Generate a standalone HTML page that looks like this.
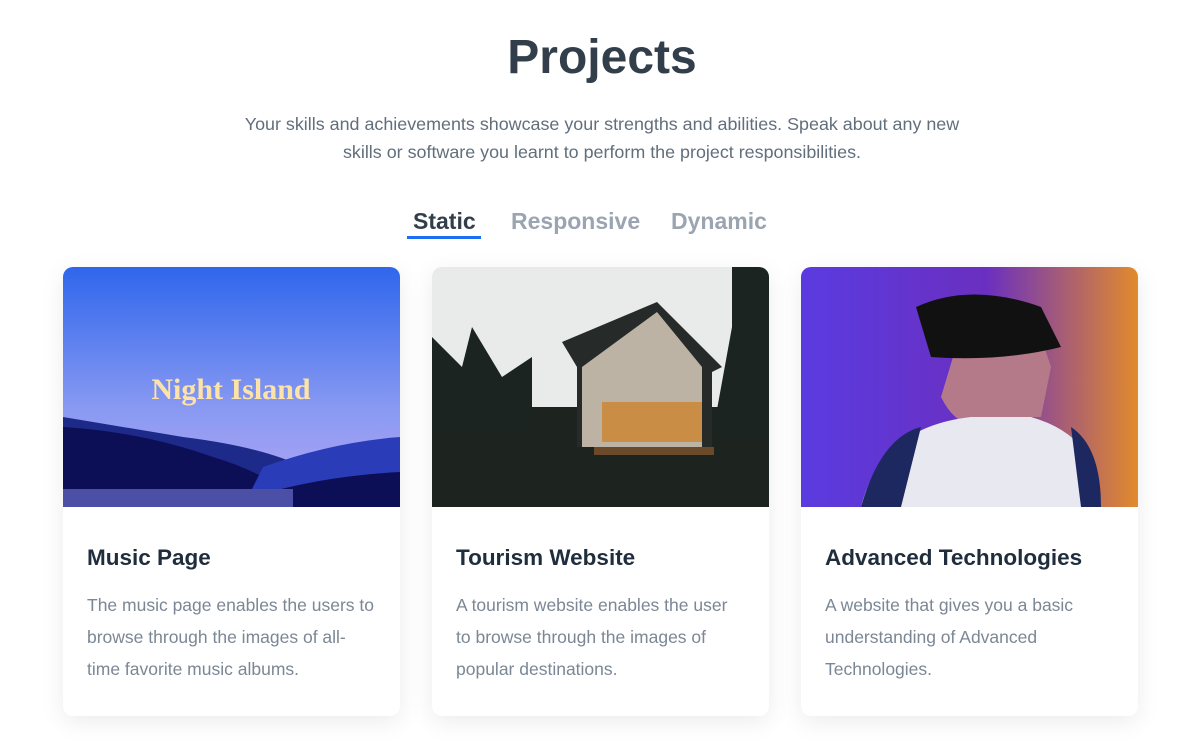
<!DOCTYPE html>
<html><head><meta charset="utf-8"><style>
body{margin:0;background:#fff;font-family:"Liberation Sans",sans-serif;width:1204px;height:742px;overflow:hidden;position:relative}
h1{position:absolute;top:30px;left:0;width:1204px;text-align:center;margin:0;font-size:48px;font-weight:bold;color:#323f4b}
.sub{position:absolute;top:110px;left:0;width:1204px;text-align:center;font-size:17.9px;line-height:28px;color:#616e7c;margin:0}
.tab{position:absolute;top:208px;font-size:23px;font-weight:bold;color:#9aa5b1}
.card{position:absolute;top:267px;width:337px;height:449px;border-radius:10px;background:#fff;box-shadow:0 6px 24px rgba(0,0,0,0.08);overflow:hidden}
.img{height:240px;position:relative;overflow:hidden}
.card h3{margin:0;position:absolute;top:278px;left:24px;font-size:22.5px;font-weight:bold;color:#1f2d3d}
.card p{margin:0;position:absolute;top:322px;left:24px;width:290px;font-size:17.5px;line-height:32px;color:#7b8794}
</style></head><body>
<h1>Projects</h1>
<p class="sub">Your skills and achievements showcase your strengths and abilities. Speak about any new<br>skills or software you learnt to perform the project responsibilities.</p>
<div class="tab" style="left:413px;color:#323f4b">Static</div>
<div style="position:absolute;left:407px;top:236px;width:74px;height:3px;background:#1c6ef2"></div>
<div class="tab" style="left:511px">Responsive</div>
<div class="tab" style="left:671px">Dynamic</div>

<div class="card" style="left:63px"><div class="img">
<svg width="337" height="240" viewBox="0 0 337 240">
<defs><linearGradient id="s" x1="0" y1="0" x2="0" y2="1"><stop offset="0" stop-color="#2f66ec"/><stop offset="0.6" stop-color="#8a9af2"/><stop offset="1" stop-color="#b6a6f4"/></linearGradient></defs>
<rect width="337" height="240" fill="url(#s)"/>
<path d="M330 22a18 18 0 0 1-34 32a20 20 0 0 0 34-32z" fill="#fff"/>
<path d="M0 150 Q60 160 120 170 Q200 180 240 200 L337 195 L337 240 L0 240Z" fill="#1e2a8a"/>
<path d="M0 160 Q80 165 150 190 Q200 205 230 230 L0 240Z" fill="#0c0f55"/>
<path d="M200 200 Q270 175 337 170 L337 240 L180 240Z" fill="#2b3cb8"/>
<path d="M160 240 Q240 210 337 205 L337 240Z" fill="#0c0f55"/>
<rect x="0" y="222" width="230" height="18" fill="#4b4fa6"/>
<text x="168" y="132" text-anchor="middle" font-family="Liberation Serif,serif" font-weight="bold" font-size="30" fill="#fde3a8">Night Island</text>
</svg></div>
<h3>Music Page</h3><p>The music page enables the users to browse through the images of all-time favorite music albums.</p></div>

<div class="card" style="left:432px"><div class="img">
<svg width="337" height="240" viewBox="0 0 337 240">
<rect width="337" height="240" fill="#e9ebea"/>
<rect y="140" width="337" height="100" fill="#1d2420"/>
<path d="M0 70 L30 100 L40 60 L70 110 L100 90 L100 160 L0 160Z" fill="#1b2420"/>
<path d="M300 0 L337 0 L337 170 L280 170 L300 60Z" fill="#1b2420"/>
<path d="M130 75 L225 35 L290 100 L280 105 L280 180 L145 180 L145 100Z" fill="#262b29"/>
<path d="M150 100 L225 45 L270 100 L270 180 L150 180Z" fill="#bdb3a4"/>
<rect x="170" y="135" width="100" height="40" fill="#c98d45"/>
<rect x="162" y="180" width="120" height="8" fill="#6b4a2c"/>
</svg></div>
<h3>Tourism Website</h3><p>A tourism website enables the user to browse through the images of popular destinations.</p></div>

<div class="card" style="left:801px"><div class="img">
<svg width="337" height="240" viewBox="0 0 337 240">
<defs><linearGradient id="v" x1="0" x2="1"><stop offset="0" stop-color="#5a3be0"/><stop offset="0.55" stop-color="#6a2fc0"/><stop offset="1" stop-color="#e28a2c"/></linearGradient></defs>
<rect width="337" height="240" fill="url(#v)"/>
<path d="M140 130 Q160 170 190 150 L240 150 L250 100 L230 40 L170 30 Z" fill="#b57a8a"/>
<path d="M115 40 Q170 15 240 40 L260 80 Q200 95 130 90 Z" fill="#111"/>
<path d="M60 240 Q80 160 170 150 L230 150 Q300 170 300 240Z" fill="#e8e8f0"/>
<path d="M60 240 Q80 170 120 160 L100 240Z M300 240 Q300 180 270 160 L280 240Z" fill="#1d2760"/>
</svg></div>
<h3>Advanced Technologies</h3><p>A website that gives you a basic understanding of Advanced Technologies.</p></div>
</body></html>
